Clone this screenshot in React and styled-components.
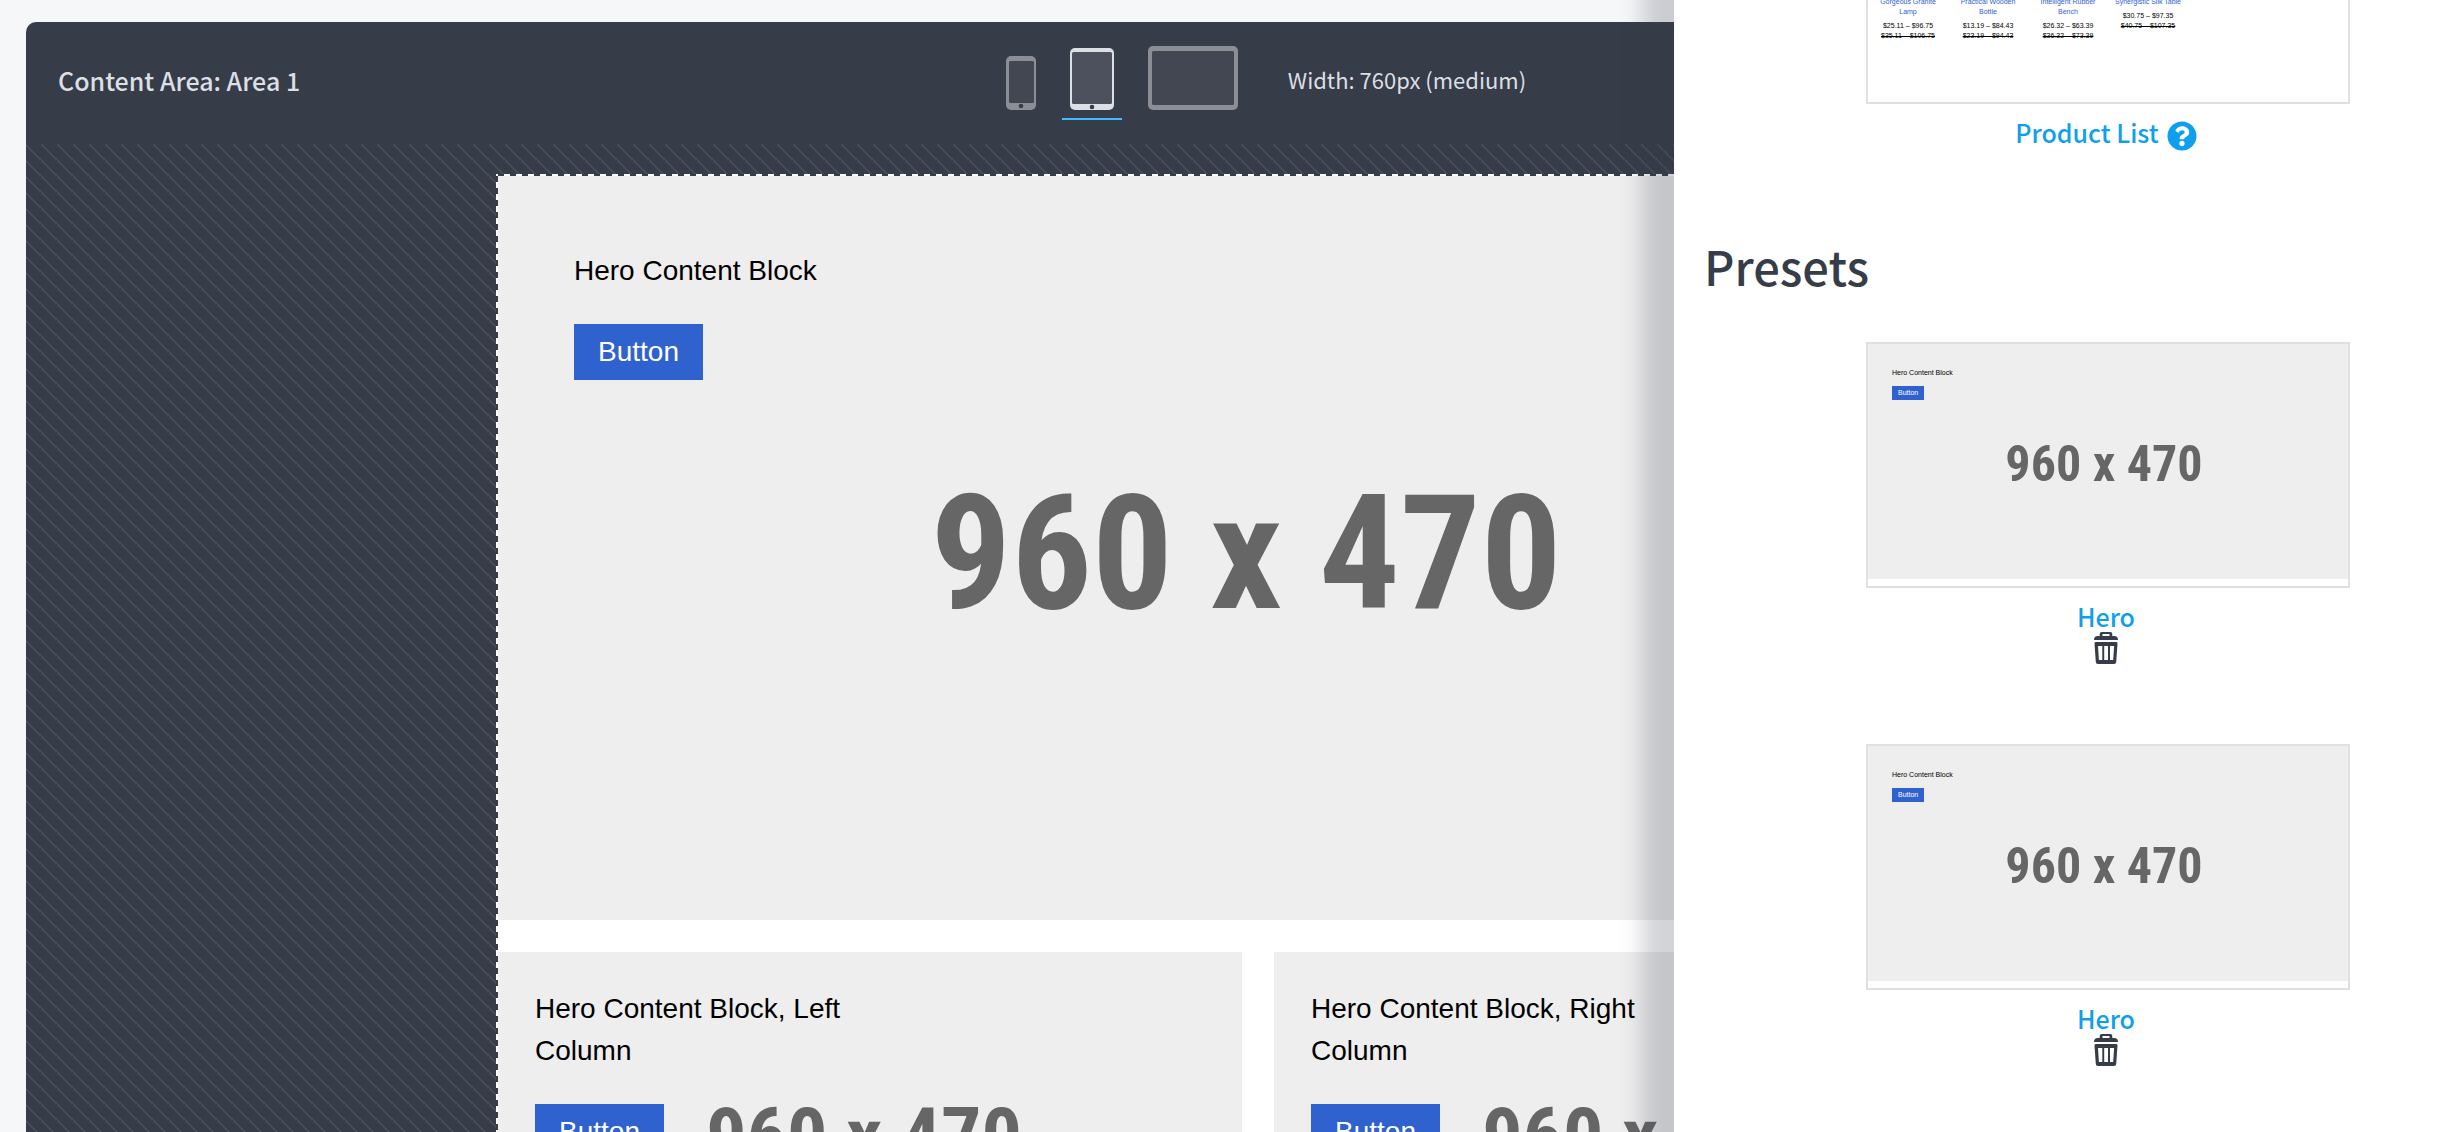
import React from 'react';
import styled, { createGlobalStyle } from 'styled-components';
import { FaQuestionCircle } from 'react-icons/fa';

const colors = {
  ink: '#373c49',
  page: '#f6f7f9',
  light: '#dcdfe3',
  border: '#dee1e4',
  link: '#0f9fee',
  accent: '#45bbff',
  primary: '#2f62cf',
  grey: '#eeeeee',
  placeholder: '#666666',
};

const uiFont = '"Noto Sans CJK SC", "Open Sans", sans-serif';
const contentFont = '"Liberation Sans", Arial, sans-serif';

const GlobalStyle = createGlobalStyle`
  *, *::before, *::after { box-sizing: border-box; }
  body { margin: 0; background: ${colors.page}; color: ${colors.ink}; font-family: ${uiFont}; }
  h1, h2, h3, p, ul { margin: 0; padding: 0; }
  button { font: inherit; border: 0; background: none; cursor: pointer; }
  svg { display: block; }
`;

const Page = styled.div`
  height: 100vh;
  overflow: hidden;
  padding: 22px 0 0 26px;
`;

const Editor = styled.main`
  height: 100%;
  margin-right: -36px;
  display: flex;
  flex-direction: column;
  border-radius: 10px 10px 0 0;
  overflow: hidden;
  background: ${colors.ink};
`;

const Toolbar = styled.header`
  flex: none;
  display: grid;
  grid-template-columns: 1fr auto 1fr;
  height: 122px;
  padding: 0 24px 0 32px;
  color: ${colors.light};
`;

const AreaTitle = styled.h1`
  align-self: center;
  padding-bottom: 6px;
  font-size: 25px;
  line-height: 36px;
  font-weight: 500;
`;

const Devices = styled.div`
  display: flex;
  align-items: flex-end;
  gap: 18px;
  padding-bottom: 24px;
`;

const DeviceButton = styled.button`
  padding: 0 8px 8px;
  border-bottom: 2px solid ${(p) => (p.$active ? colors.accent : 'transparent')};
  color: ${(p) => (p.$active ? colors.light : '#8b8f95')};
`;

const WidthLabel = styled.p`
  align-self: center;
  margin-left: 24px;
  padding-top: 16px;
  font-size: 22px;
  line-height: 36px;
`;

const Stage = styled.div`
  flex: 1;
  min-height: 0;
  overflow: hidden;
  padding-top: 30px;
  background: linear-gradient(45deg, transparent 46%, #4b525f 48%, #4b525f 52%, transparent 54%) -1px 0 / 16px 16px;
`;

const dashes = (angle) =>
  `repeating-linear-gradient(${angle}, #fff 0 2px, ${colors.ink} 2px 8px, #fff 8px 12px)`;

const Canvas = styled.div`
  width: 1524px;
  margin: 0 auto;
  padding: 2px;
  background:
    ${dashes('90deg')} top / 100% 2px no-repeat,
    ${dashes('180deg')} left / 2px 100% no-repeat,
    ${dashes('180deg')} right / 2px 100% no-repeat,
    #fff;
  font-family: ${contentFont};
  color: #000;
`;

const Columns = styled.div`
  display: grid;
  grid-template-columns: 1fr 1fr;
  gap: 32px;
  margin-top: 32px;
`;

const blockSizes = {
  large: { pad: '74px 76px', font: 28, line: 42, gap: 32, button: 56, inset: 24, number: 160, nudge: 24, drop: 12 },
  medium: { pad: '36px 37px', font: 28, line: 42, gap: 32, button: 56, inset: 24, number: 80, nudge: 12, drop: 6 },
  small: { pad: '24px', font: 7, line: 10, gap: 8, button: 14, inset: 6, number: 50, nudge: 8, drop: 4 },
};

const Block = styled.section`
  position: relative;
  aspect-ratio: 960 / 470;
  padding: ${(p) => p.$s.pad};
  background: ${colors.grey};
  font-size: ${(p) => p.$s.font}px;
  line-height: ${(p) => p.$s.line}px;
`;

const BackdropLabel = styled.div`
  position: absolute;
  inset: 0;
  display: flex;
  align-items: center;
  justify-content: center;
  padding: ${(p) => p.$s.drop}px ${(p) => p.$s.nudge}px 0 0;
  color: ${colors.placeholder};
  font-family: "Roboto Condensed", "Liberation Sans Narrow", sans-serif;
  font-weight: 700;
  font-size: ${(p) => p.$s.number}px;
  line-height: 1;
  white-space: nowrap;
`;

const BlockBody = styled.div`
  position: relative;
  width: ${(p) => (p.$half ? '372px' : 'auto')};
`;

const BlockButton = styled.button`
  display: block;
  margin-top: ${(p) => p.$s.gap}px;
  height: ${(p) => p.$s.button}px;
  padding: 0 ${(p) => p.$s.inset}px;
  background: ${colors.primary};
  color: #fff;
`;

const Panel = styled.aside`
  position: fixed;
  top: 0;
  right: 0;
  bottom: 0;
  width: 780px;
  overflow: hidden;
  padding: 0 30px;
  background: #fff;
`;

const PanelShade = styled.div`
  position: fixed;
  top: -40px;
  right: 0;
  bottom: -40px;
  width: 780px;
  box-shadow: -32px 0 20px rgba(56, 61, 74, 0.22);
`;

const WidgetList = styled.ul`
  list-style: none;
  display: flex;
  flex-direction: column;
  align-items: center;
  gap: 80px;
  padding-left: 88px;
  margin-top: ${(p) => (p.$scrolled ? '-142px' : '0')};
`;

const Widget = styled.li`
  display: flex;
  flex-direction: column;
  align-items: center;
`;

const Caption = styled.div`
  display: flex;
  flex-direction: column;
  align-items: center;
  padding: 12px 4px 0 0;
`;

const Thumb = styled.div`
  width: 484px;
  height: 246px;
  border: 2px solid ${colors.border};
  background: #fff;
  font-family: ${contentFont};
  color: #000;
`;

const WidgetName = styled.a`
  display: flex;
  align-items: center;
  gap: 8px;
  color: ${colors.link};
  font-size: 25px;
  line-height: 32px;
  font-weight: 500;
  text-decoration: none;

  svg { margin-top: 4px; margin-bottom: -4px; }
`;

const IconButton = styled.button`
  padding: 0;
  color: ${colors.ink};
`;

const PanelHeading = styled.h2`
  margin: 80px 0 38px;
  font-size: 47px;
  line-height: 76px;
  font-weight: 500;
`;

const Products = styled.div`
  display: grid;
  grid-template-columns: repeat(6, 1fr);
  padding-top: 8px;
`;

const Product = styled.div`
  display: flex;
  flex-direction: column;
  align-items: center;
  text-align: center;
  padding: 0 4px;
  font-size: 7px;
  line-height: 10px;
`;

const ProductPicture = styled.div`
  width: 64px;
  height: 121px;
  margin-bottom: 8px;
  background: ${colors.grey};
`;

const ProductName = styled.a`
  color: ${colors.primary};
  text-decoration: none;
  margin-bottom: 4px;
`;

const Price = styled.span`
  white-space: nowrap;
`;

const OldPrice = styled.s`
  white-space: nowrap;
`;

const products = [
  ['Gorgeous Granite Lamp', '$25.11 – $96.75', '$35.11 – $106.75'],
  ['Practical Wooden Bottle', '$13.19 – $84.43', '$23.19 – $94.43'],
  ['Intelligent Rubber Bench', '$26.32 – $63.39', '$36.32 – $73.39'],
  ['Synergistic Silk Table', '$30.75 – $97.35', '$40.75 – $107.35'],
];

const devices = [
  { name: 'Small', w: 30, h: 54, screen: [3, 5, 25, 42], home: [15, 50] },
  { name: 'Medium', w: 44, h: 62, screen: [2, 4, 40, 52], home: [22, 59], active: true },
  { name: 'Large', w: 90, h: 64, screen: [4, 5, 82, 54] },
];

function DeviceIcon({ w, h, screen, home, active }) {
  const [x, y, sw, sh] = screen;
  return (
    <svg width={w} height={h} viewBox={`0 0 ${w} ${h}`}>
      <rect width={w} height={h} rx="5" fill="currentColor" />
      <rect x={x} y={y} width={sw} height={sh} rx="1.5" fill={active ? '#4c515d' : '#424752'} />
      {home && <circle cx={home[0]} cy={home[1]} r="2.3" fill={colors.ink} />}
    </svg>
  );
}

function TrashIcon() {
  return (
    <svg width="24" height="32" viewBox="0 0 24 32" fill="currentColor">
      <path d="M5.7 4V2a2 2 0 0 1 2-2h8.6a2 2 0 0 1 2 2v2h1.9A3.8 3.8 0 0 1 24 7.8V8H0v-.2A3.8 3.8 0 0 1 3.8 4zM8.5 4h7V2h-7z" fillRule="evenodd" />
      <path d="M2 10h20a1.5 1.5 0 0 1 1.5 1.6L22.2 30a2.2 2.2 0 0 1-2.2 2H4a2.2 2.2 0 0 1-2.2-2L.5 11.6A1.5 1.5 0 0 1 2 10zM4 14l.9 14h3.4V14zM10.2 14v14h3.8V14zM16 14v14h3.2l.9-14z" fillRule="evenodd" />
    </svg>
  );
}

function HeroBlock({ size, text }) {
  const s = blockSizes[size];
  return (
    <Block $s={s}>
      <BackdropLabel $s={s}>960 x 470</BackdropLabel>
      <BlockBody $half={size === 'medium'}>
        <p>{text}</p>
        <BlockButton $s={s} type="button">Button</BlockButton>
      </BlockBody>
    </Block>
  );
}

function HeroPreset() {
  return (
    <Widget>
      <Thumb>
        <HeroBlock size="small" text="Hero Content Block" />
      </Thumb>
      <Caption>
        <WidgetName href="#hero">Hero</WidgetName>
        <IconButton type="button" aria-label="Delete preset">
          <TrashIcon />
        </IconButton>
      </Caption>
    </Widget>
  );
}

export default function App() {
  return (
    <>
      <GlobalStyle />
      <Page>
        <Editor>
          <Toolbar>
            <AreaTitle>Content Area: Area 1</AreaTitle>
            <Devices>
              {devices.map((d) => (
                <DeviceButton key={d.name} type="button" aria-label={d.name} $active={d.active}>
                  <DeviceIcon {...d} />
                </DeviceButton>
              ))}
              <WidthLabel>Width: 760px (medium)</WidthLabel>
            </Devices>
          </Toolbar>
          <Stage>
            <Canvas>
              <HeroBlock size="large" text="Hero Content Block" />
              <Columns>
                <HeroBlock size="medium" text="Hero Content Block, Left Column" />
                <HeroBlock size="medium" text="Hero Content Block, Right Column" />
              </Columns>
            </Canvas>
          </Stage>
        </Editor>
      </Page>
      <PanelShade />
      <Panel>
        <WidgetList $scrolled>
          <Widget>
            <Thumb>
              <Products>
                {products.map(([name, price, old]) => (
                  <Product key={name}>
                    <ProductPicture />
                    <ProductName href="#product">{name}</ProductName>
                    <Price>{price}</Price>
                    <OldPrice>{old}</OldPrice>
                  </Product>
                ))}
              </Products>
            </Thumb>
            <Caption>
              <WidgetName href="#product-list">
                Product List
                <FaQuestionCircle size={30} />
              </WidgetName>
            </Caption>
          </Widget>
        </WidgetList>
        <PanelHeading>Presets</PanelHeading>
        <WidgetList>
          <HeroPreset />
          <HeroPreset />
        </WidgetList>
      </Panel>
    </>
  );
}
